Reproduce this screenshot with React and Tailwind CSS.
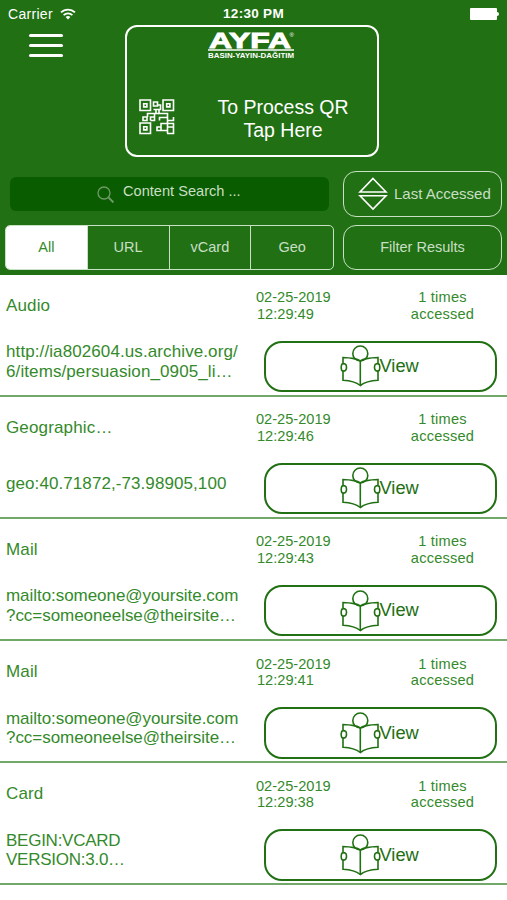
const rows = [
  {
    type: 'Audio',
    lines: ['http://ia802604.us.archive.org/', '6/items/persuasion_0905_li…'],
    time: '12:29:49',
    tracking: 'tracking-[0.1px]',
  },
  { type: 'Geographic…', lines: ['geo:40.71872,-73.98905,100'], time: '12:29:46', tracking: 'tracking-[0.08px]' },
  {
    type: 'Mail',
    lines: ['mailto:someone@yoursite.com', '?cc=someoneelse@theirsite…'],
    time: '12:29:43',
    tracking: 'tracking-[-0.05px]',
  },
  {
    type: 'Mail',
    lines: ['mailto:someone@yoursite.com', '?cc=someoneelse@theirsite…'],
    time: '12:29:41',
    tracking: 'tracking-[-0.05px]',
  },
  { type: 'Card', lines: ['BEGIN:VCARD', 'VERSION:3.0…'], time: '12:29:38', tracking: 'tracking-[-0.25px]' },
]

const WifiIcon = () => (
  <svg className="ml-[7px] h-[12px] w-[16px]" viewBox="0 0 16 12" fill="none" stroke="currentColor" strokeWidth="1.7">
    <path d="M1 4.4a10 10 0 0 1 14 0M3.6 7.2a6.3 6.3 0 0 1 8.8 0" />
    <path d="M8 11.6 5.6 9.1a3.5 3.5 0 0 1 4.8 0Z" fill="currentColor" stroke="none" />
  </svg>
)

const QrIcon = () => (
  <svg className="h-[36px] w-[36px]" viewBox="0 0 36 36" fill="none" stroke="currentColor" strokeWidth="1.6">
    <path d="M1 1h10.500v10.500H1ZM24 1h10.500v10.500H24ZM1 24h10.500v10.500H1Z" />
    <path d="M4.700 4.700h3.200v3.200h-3.200ZM27.700 4.700h3.200v3.200h-3.200ZM4.700 27.700h3.200v3.200h-3.200Z" />
    <path d="M14.500 3h4v4h-4ZM18.500 6h3v4.500h-4.500V14M14.500 10.500h3" />
    <path d="M20 14.500H8.500v3.500M4 18h4v3.500H4ZM11.500 21.500V18h4v-3.500M11.500 21.500h4V18" />
    <path d="M20 10.500v4h8.500v20M24 18.500h4.500M28.500 21.500h6v-3.500M20.500 21.500v-3h4M18 28h4v3.500h-4ZM22 28v-3.500h12.500v10h-6.500M22 31.500h6M28.500 28h6" />
  </svg>
)

const SortIcon = () => (
  <svg className="h-[34px] w-[30px]" viewBox="0 0 30 34" fill="none" stroke="currentColor" strokeWidth="1.6">
    <path d="M15 1.500 28 15H2ZM2 18.700h26L15 32Z" />
  </svg>
)

const ReaderIcon = () => (
  <svg className="h-[42px] w-[41px] shrink-0" viewBox="0 0 41 42" fill="none" stroke="currentColor" strokeWidth="1.6">
    <circle cx="20.300" cy="8.500" r="7.500" />
    <path d="M20.300 15.500v25" />
    <path d="M3 18.500v-6q6 .2 11 1.100 4.300.8 6.300 2.200 2-1.400 6.300-2.200 5-.9 11.400-1.100v6M3 26v9.200q11.500.6 17.300 5.300 6-4.700 17.700-5.300V26" />
    <path d="M1.800 19.200q2.700-1.500 4.200.6 1 2.500 0 5-1.500 2.200-4.200.7-1.200-3.100 0-6.300ZM39.200 19.200q-2.700-1.500-4.200.6-1 2.500 0 5 1.500 2.200 4.200.7 1.200-3.100 0-6.300Z" />
  </svg>
)

const Logo = () => (
  <svg className="mt-[4px] h-[29px] w-[90px] overflow-visible" viewBox="0 0 90 29" fill="currentColor">
    <text x="2" y="16.500" fontFamily="Liberation Sans, sans-serif" fontWeight="700" fontSize="21.500" textLength="82" lengthAdjust="spacingAndGlyphs" stroke="currentColor" strokeWidth=".9">AYFA</text>
    <text x="82.500" y="5.500" fontFamily="Liberation Sans, sans-serif" fontSize="6">®</text>
    <path d="M1 18.200h86v1.500H1Z" />
    <text x="1" y="27" fontFamily="Liberation Sans, sans-serif" fontWeight="700" fontSize="6.700" textLength="86" lengthAdjust="spacingAndGlyphs">BASIN-YAYIN-DAĞITIM</text>
  </svg>
)

const Row = ({ row }) => (
  <div className="flex h-[122.2px] border-b-2 border-[#72a96b] text-[#348a2b]">
    <div className="w-[256px] shrink-0 pl-[6px]">
      <div className="mt-[20px] h-[22px] text-[17px] leading-[22px] tracking-[0.15px]">{row.type}</div>
      <div className={`mt-[23px] flex h-[44px] flex-col justify-center text-[17px] leading-[19.500px] whitespace-nowrap ${row.tracking}`}>
        {row.lines.map((line) => (
          <div key={line}>{line}</div>
        ))}
      </div>
    </div>
    <div className="flex-1">
      <div className="flex h-[66px] pt-[14.500px] text-[14.600px] leading-[16.500px]">
        <div className="w-[134px]">
          <div>02-25-2019</div>
          <div className="pl-px">{row.time}</div>
        </div>
        <div className="w-[105px] text-center tracking-[0.2px]">
          <div>1 times</div>
          <div>accessed</div>
        </div>
      </div>
      <button className="ml-[7.500px] flex h-[51.500px] w-[233.500px] items-center rounded-[18px] border-2 border-[#217014] pl-[74px] text-[#217014]">
        <ReaderIcon />
        <span className="-ml-px text-[18.300px] leading-none">View</span>
      </button>
    </div>
  </div>
)

const App = () => {
  return (
    <div className="h-[900px] w-[507px] overflow-hidden bg-white font-['Liberation_Sans',sans-serif]">
      <header className="h-[274.500px] bg-[#217014] text-white">
        <div className="grid h-[25px] grid-cols-3 items-center px-[8px] pt-[3px] text-[14px]">
          <div className="flex items-center tracking-[0.3px]">
            Carrier
            <WifiIcon />
          </div>
          <div className="text-center text-[13.500px] font-bold tracking-[0.3px]">12:30 PM</div>
          <div className="flex items-center justify-end">
            <div className="h-[12px] w-[27px] rounded-[1px] bg-white"></div>
            <div className="h-[4px] w-[2px] rounded-r bg-white"></div>
          </div>
        </div>

        <div className="flex h-[133px]">
          <div className="w-[125px] pt-[8.500px] pl-[29px]">
            <div className="h-[3.500px] w-[34px] rounded-full bg-white"></div>
            <div className="mt-[6.500px] h-[3.500px] w-[34px] rounded-full bg-white"></div>
            <div className="mt-[6.500px] h-[3.500px] w-[34px] rounded-full bg-white"></div>
          </div>
          <div className="h-[132px] w-[254px] rounded-[12px] border-2 border-white">
            <div className="flex justify-center">
              <Logo />
            </div>
            <div className="mt-[36px] flex">
              <div className="w-[76px] pt-[3px] pl-[12px]">
                <QrIcon />
              </div>
              <div className="w-[160px] text-center text-[19.500px] leading-[23px]">
                To Process QR
                <br />
                Tap Here
              </div>
            </div>
          </div>
        </div>

        <div className="mt-[13px] flex h-[46px] items-center">
          <div className="ml-[10px] flex h-[34px] w-[319px] items-center rounded-[6px] bg-[#095c00] pl-[87px] text-[#c8dfc4]">
            <svg className="mt-[1px] h-[17px] w-[17px] text-[#6f9a68]" viewBox="0 0 17 17" fill="none" stroke="currentColor" strokeWidth="1.3">
              <circle cx="7" cy="7" r="6" />
              <path d="m11.400 11.400 5 5" strokeWidth="2" />
            </svg>
            <span className="-mt-[4px] ml-[9px] text-[14.600px]">Content Search ...</span>
          </div>
          <button className="ml-[14px] flex h-[46px] w-[159px] items-center rounded-[13px] border border-[#c8e0c4] pl-[14px] text-[15px] text-[#c8dfc4]">
            <span className="-mt-px text-white">
              <SortIcon />
            </span>
            <span className="ml-[6px]">Last Accessed</span>
          </button>
        </div>

        <div className="mt-[8px] flex h-[45px]">
          <div className="ml-[5px] grid w-[329px] grid-cols-4 divide-x divide-[#c8e0c4] overflow-hidden rounded-[5px] border border-[#c8e0c4] text-[14.500px] text-[#c8dfc4]">
            <button className="bg-white text-[#348a2b]">All</button>
            <button>URL</button>
            <button>vCard</button>
            <button>Geo</button>
          </div>
          <button className="ml-[9px] w-[159px] rounded-[13px] border border-[#c8e0c4] text-[14.500px] text-[#c8dfc4]">
            Filter Results
          </button>
        </div>
      </header>

      {rows.map((row) => (
        <Row key={row.time} row={row} />
      ))}
    </div>
  )
}

export default App
